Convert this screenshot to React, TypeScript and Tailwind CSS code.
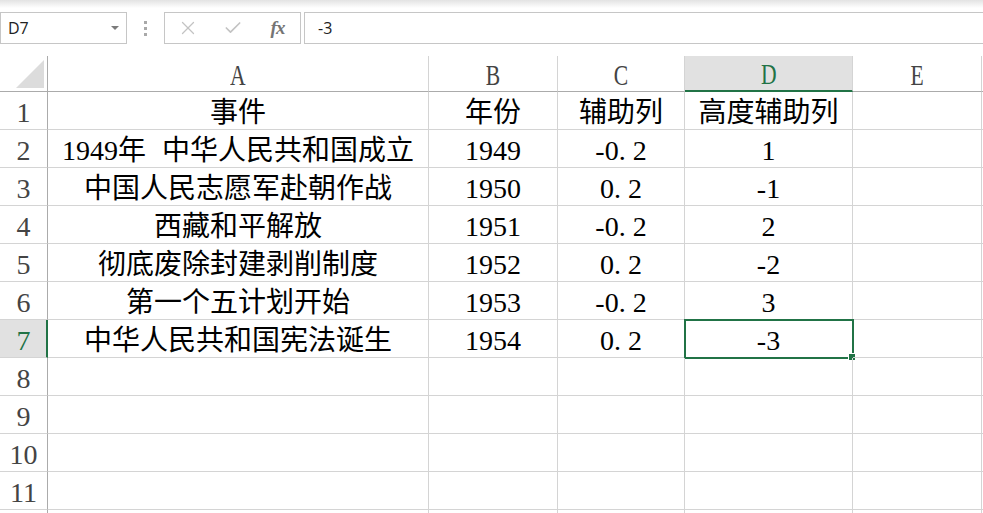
import { X, Check } from 'lucide-react';

const colWidths = [381, 129, 127, 168, 129];
const colNames = ['A', 'B', 'C', 'D', 'E'];

const data: string[][] = [
  ['事件', '年份', '辅助列', '高度辅助列'],
  ['1949年 中华人民共和国成立', '1949', '-0. 2', '1'],
  ['中国人民志愿军赴朝作战', '1950', '0. 2', '-1'],
  ['西藏和平解放', '1951', '-0. 2', '2'],
  ['彻底废除封建剥削制度', '1952', '0. 2', '-2'],
  ['第一个五计划开始', '1953', '-0. 2', '3'],
  ['中华人民共和国宪法诞生', '1954', '0. 2', '-3'],
];

const ROWS = 11;
const activeRow = 7;
const activeCol = 3;

const cellFont = "font-['Liberation_Serif','Noto_Sans_CJK_SC',serif]";

export default function App() {
  return (
    <div className="w-[983px] h-[513px] overflow-hidden bg-white select-none">
      {/* name box + formula bar */}
      <div className="h-[56px] pt-[12px] flex items-start bg-[linear-gradient(to_bottom,#e3e3e3,#ffffff_8px)]">
        <div className="w-[127px] h-[32px] bg-white border border-[#c6c6c6] flex items-center justify-between pl-[7px] pr-[7px]">
          <span className="font-['Open_Sans','Liberation_Sans',sans-serif] text-[16px] text-[#222]">D7</span>
          <span className="w-0 h-0 border-l-[4px] border-r-[4px] border-t-[4px] border-l-transparent border-r-transparent border-t-[#7b7b7b]" />
        </div>
        <div className="w-[37px] h-[32px] flex flex-col items-center justify-center gap-[3px]">
          <span className="w-[3px] h-[3px] bg-[#a9a9a9]" />
          <span className="w-[3px] h-[3px] bg-[#a9a9a9]" />
          <span className="w-[3px] h-[3px] bg-[#a9a9a9]" />
        </div>
        <div className="w-[137px] h-[32px] bg-white border border-[#c6c6c6] flex">
          <span className="w-[45px] flex items-center justify-center text-[#c3c3c3]">
            <X size={22} strokeWidth={1.4} />
          </span>
          <span className="w-[45px] flex items-center justify-center text-[#c3c3c3]">
            <Check size={20} strokeWidth={2} />
          </span>
          <span className="w-[45px] flex items-center justify-center font-['Liberation_Serif',serif] italic font-bold text-[19px] text-[#757575] tracking-[-1px]">
            fx
          </span>
        </div>
        <div className="ml-[3px] flex-1 h-[32px] bg-white border border-r-0 border-[#c6c6c6] flex items-center pl-[13px]">
          <span className="font-['Open_Sans','Liberation_Sans',sans-serif] text-[16px] text-[#222]">-3</span>
        </div>
      </div>

      {/* column headers */}
      <div className="flex h-[36px]">
        <div className="w-[48px] shrink-0 border-r border-b border-[#ababab] relative">
          <svg width="29" height="29" viewBox="0 0 29 29" className="absolute left-[16px] top-[4px]">
            <polygon points="0,28 28,28 28,0" fill="#dcdcdc" />
          </svg>
        </div>
        {colWidths.map((w, i) => {
          const on = i === activeCol;
          return (
            <div
              key={colNames[i]}
              style={{ width: w }}
              className={`shrink-0 flex items-center justify-center border-r border-r-[#d4d4d4] ${
                on ? 'bg-[#e1e1e1] border-b-2 border-b-[#217346]' : 'border-b border-b-[#ababab]'
              }`}
            >
              <span
                className={`inline-block scale-x-[0.72] font-['Liberation_Serif',serif] text-[30px] leading-none ${
                  on ? 'text-[#217346] mt-[2px]' : 'text-[#444] mt-[3px]'
                }`}
              >
                {colNames[i]}
              </span>
            </div>
          );
        })}
        <div className="flex-1 border-b border-[#ababab]" />
      </div>

      {/* rows */}
      {Array.from({ length: ROWS }, (_, r) => {
        const rowNo = r + 1;
        const cells = data[r] ?? [];
        const rowOn = rowNo === activeRow;
        return (
          <div key={rowNo} className="flex h-[38px]">
            <div
              className={`w-[48px] shrink-0 flex items-center justify-center border-b border-b-[#d4d4d4] ${
                rowOn ? 'bg-[#e1e1e1] border-r-2 border-r-[#217346] pl-[1px]' : 'border-r border-r-[#ababab]'
              }`}
            >
              <span
                className={`font-['Liberation_Serif',serif] text-[28px] leading-none mt-[4px] ${
                  rowOn ? 'text-[#217346]' : 'text-[#444]'
                }`}
              >
                {rowNo}
              </span>
            </div>
            {colWidths.map((w, c) => {
              const sel = rowOn && c === activeCol;
              return (
                <div
                  key={c}
                  style={{ width: w }}
                  className="shrink-0 relative flex items-center justify-center border-r border-b border-[#d4d4d4]"
                >
                  <span
                    className={`${cellFont} text-[28px] leading-none text-black whitespace-pre mt-[4px] ${
                      c === 0 ? '[word-spacing:9px]' : ''
                    }`}
                  >
                    {cells[c] ?? ''}
                  </span>
                  {sel && (
                    <>
                      <div className="absolute -left-[1px] -top-[1px] w-[170px] h-[40px] border-2 border-[#217346] pointer-events-none" />
                      <div className="absolute left-[163px] top-[33px] w-[8px] h-[8px] bg-white p-[1px]">
                        <div className="w-full h-full bg-[#217346]" />
                      </div>
                    </>
                  )}
                </div>
              );
            })}
            <div className="flex-1 border-b border-[#d4d4d4]" />
          </div>
        );
      })}

      {/* next row, just peeking under the bottom edge */}
      <div className="flex h-[38px]">
        <div className="w-[48px] shrink-0 border-r border-[#ababab]" />
        {colWidths.map((w, c) => (
          <div key={c} style={{ width: w }} className="shrink-0 border-r border-[#d4d4d4]" />
        ))}
      </div>
    </div>
  );
}
